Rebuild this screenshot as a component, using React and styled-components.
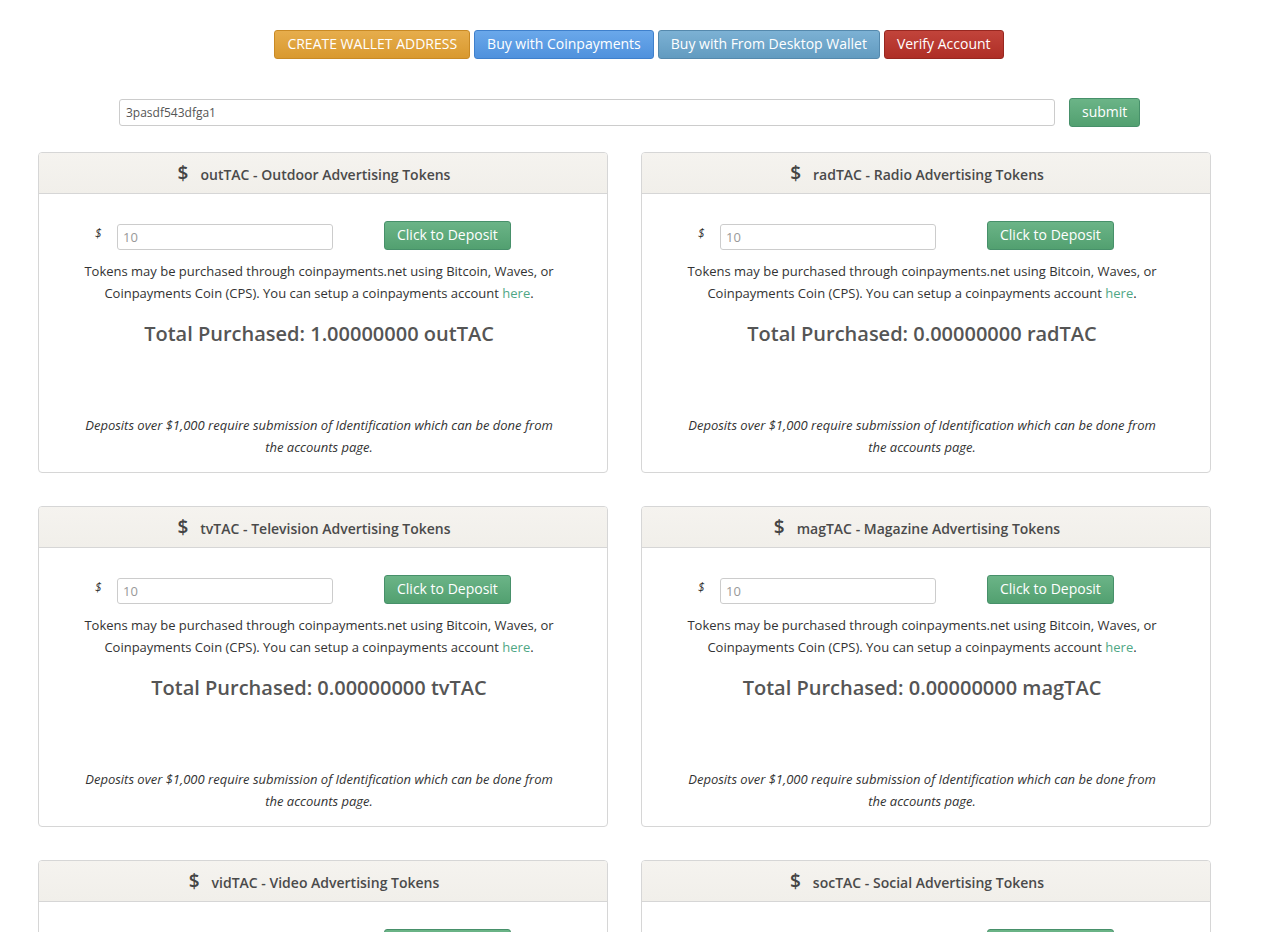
import { createGlobalStyle } from "styled-components"
import styled from "styled-components"

const GlobalStyle = createGlobalStyle`
    * { box-sizing: border-box; }
    body {
        margin: 0;
        font-family: "Open Sans", "Liberation Sans", sans-serif;
        color: #333;
        background: #fff;
    }
`

const Page = styled.div`
    padding: 30px 62px 0 38px;
`

const Toolbar = styled.div`
    display: flex;
    justify-content: center;
    gap: 4px;
    padding-left: 30px;
`

const colors = {
    warning: ["#e6ad4c", "#d9992f", "#c98a25"],
    primary: ["#6aa8ea", "#4f91dd", "#3f80cc"],
    info: ["#7cb1d4", "#629bc0", "#5589ad"],
    danger: ["#c2443b", "#ae2e26", "#982720"],
    success: ["#6bb487", "#52a070", "#47906a"],
}

const Button = styled.button`
    font-family: "Open Sans", "Liberation Sans", sans-serif;
    font-size: 14px;
    line-height: 20px;
    color: #fff;
    padding: 3px 12px 4px;
    border-radius: 3px;
    border: 1px solid ${p => colors[p.$kind][2]};
    background: linear-gradient(${p => colors[p.$kind][0]}, ${p => colors[p.$kind][1]});
    cursor: pointer;
    white-space: nowrap;
`

const AddressRow = styled.div`
    display: flex;
    align-items: center;
    margin-top: 39px;
    padding-left: 81px;
    gap: 14px;
`

const AddressInput = styled.input`
    width: 936px;
    height: 27px;
    border: 1px solid #ccc;
    border-radius: 3px;
    padding: 0 6px;
    font-family: "Open Sans", "Liberation Sans", sans-serif;
    font-size: 12px;
    color: #555;
`

const Grid = styled.div`
    display: grid;
    grid-template-columns: 570px 570px;
    column-gap: 33px;
    row-gap: 33px;
    margin-top: 25px;
`

const Card = styled.div`
    border: 1px solid #d6d6d6;
    border-radius: 4px;
    overflow: hidden;
    height: 321px;
`

const CardHeader = styled.div`
    display: flex;
    justify-content: center;
    align-items: center;
    gap: 12px;
    height: 41px;
    padding: 2px 18px 0 0;
    background: linear-gradient(#f5f3ef, #f1efea);
    border-bottom: 1px solid #d6d6d6;
    font-size: 14px;
    font-weight: 600;
    color: #4a4a4a;
`

const Dollar = styled.span`
    font-size: 19px;
    font-weight: 600;
    color: #444;
    margin-top: -2px;
`

const CardBody = styled.div`
    padding: 27px 0 0;
    text-align: center;
`

const DepositRow = styled.div`
    display: flex;
    align-items: center;
    padding-left: 56px;
`

const SmallDollar = styled.span`
    font-style: italic;
    font-size: 12px;
    color: #333;
    width: 22px;
    text-align: left;
    margin-top: -4px;
`

const AmountInput = styled.input`
    width: 216px;
    height: 26px;
    border: 1px solid #ccc;
    border-radius: 3px;
    padding: 0 5px;
    font-family: "Open Sans", "Liberation Sans", sans-serif;
    font-size: 13px;
    margin-top: 3px;
    &::placeholder { color: #999; }
`

const DepositButton = styled(Button)`
    margin-left: 51px;
    padding: 3px 12px 4px;
`

const Info = styled.p`
    margin: 10px auto 0;
    padding-right: 8px;
    width: 488px;
    font-size: 13px;
    line-height: 22px;
    color: #333;
`

const Link = styled.a`
    color: #4fa785;
    text-decoration: none;
`

const Total = styled.h3`
    margin: 16px 0 0;
    padding-right: 8px;
    font-size: 20px;
    font-weight: 600;
    color: #555;
    line-height: 28px;
`

const Note = styled.p`
    margin: 66px auto 0;
    padding-right: 8px;
    width: 488px;
    font-size: 13px;
    font-style: italic;
    line-height: 22px;
    color: #333;
`

const tokens = [
    { code: "outTAC", name: "Outdoor Advertising Tokens", total: "1.00000000" },
    { code: "radTAC", name: "Radio Advertising Tokens", total: "0.00000000" },
    { code: "tvTAC", name: "Television Advertising Tokens", total: "0.00000000" },
    { code: "magTAC", name: "Magazine Advertising Tokens", total: "0.00000000" },
    { code: "vidTAC", name: "Video Advertising Tokens", total: "0.00000000" },
    { code: "socTAC", name: "Social Advertising Tokens", total: "0.00000000" },
]

const TokenCard = ({ code, name, total }) => (
    <Card>
        <CardHeader>
            <Dollar>$</Dollar>
            <span>{code} - {name}</span>
        </CardHeader>
        <CardBody>
            <DepositRow>
                <SmallDollar>$</SmallDollar>
                <AmountInput placeholder="10" />
                <DepositButton $kind="success">Click to Deposit</DepositButton>
            </DepositRow>
            <Info>
                Tokens may be purchased through coinpayments.net using Bitcoin, Waves, or
                Coinpayments Coin (CPS). You can setup a coinpayments account <Link href="#">here</Link>.
            </Info>
            <Total>Total Purchased: {total} {code}</Total>
            <Note>
                Deposits over $1,000 require submission of Identification which can be done from
                the accounts page.
            </Note>
        </CardBody>
    </Card>
)

const App = () => {
    return (
        <>
            <GlobalStyle />
            <Page>
                <Toolbar>
                    <Button $kind="warning">CREATE WALLET ADDRESS</Button>
                    <Button $kind="primary">Buy with Coinpayments</Button>
                    <Button $kind="info">Buy with From Desktop Wallet</Button>
                    <Button $kind="danger">Verify Account</Button>
                </Toolbar>
                <AddressRow>
                    <AddressInput defaultValue="3pasdf543dfga1" />
                    <Button $kind="success">submit</Button>
                </AddressRow>
                <Grid>
                    {tokens.map(t => <TokenCard key={t.code} {...t} />)}
                </Grid>
            </Page>
        </>
    )
}

export default App
